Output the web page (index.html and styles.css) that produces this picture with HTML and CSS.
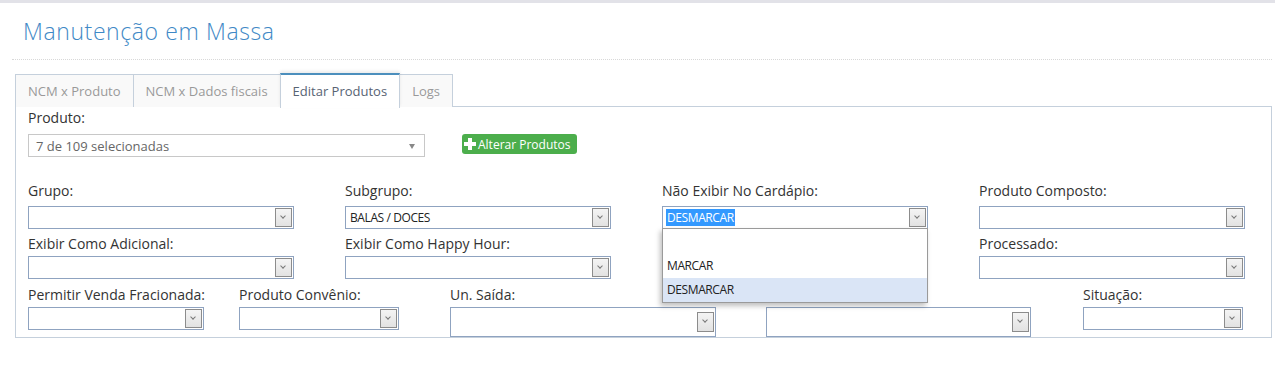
FILE: index.html
```html
<!DOCTYPE html>
<html lang="pt-BR">
<head>
    <meta charset="UTF-8">
    <title>Manutenção em Massa</title>
    <link rel="stylesheet" href="styles.css">
</head>
<body>
    <div class="topbar"></div>
    <div class="page">
        <div class="page-header">
            <h1>Manutenção em Massa</h1>
        </div>

        <ul class="tabs">
            <li class="tab">NCM x Produto</li>
            <li class="tab">NCM x Dados fiscais</li>
            <li class="tab active">Editar Produtos</li>
            <li class="tab">Logs</li>
        </ul>

        <div class="tab-content">
            <div class="produto-row">
                <div class="field">
                    <label>Produto:</label>
                    <div class="chosen">7 de 109 selecionadas<span class="caret"></span></div>
                </div>
                <button class="btn-green"><span class="plus"></span>Alterar Produtos</button>
            </div>

            <div class="grid4 row1">
                <div class="field">
                    <label>Grupo:</label>
                    <div class="select"><span class="arrow"></span></div>
                </div>
                <div class="field">
                    <label>Subgrupo:</label>
                    <div class="select"><span class="value">BALAS / DOCES</span><span class="arrow"></span></div>
                </div>
                <div class="field dropdown-host">
                    <label>Não Exibir No Cardápio:</label>
                    <div class="select"><span class="value selected">DESMARCAR</span><span class="arrow"></span></div>
                    <ul class="dropdown">
                        <li class="option blank"></li>
                        <li class="option">MARCAR</li>
                        <li class="option hover">DESMARCAR</li>
                    </ul>
                </div>
                <div class="field">
                    <label>Produto Composto:</label>
                    <div class="select"><span class="arrow"></span></div>
                </div>
            </div>

            <div class="grid4 row2">
                <div class="field">
                    <label>Exibir Como Adicional:</label>
                    <div class="select"><span class="arrow"></span></div>
                </div>
                <div class="field">
                    <label>Exibir Como Happy Hour:</label>
                    <div class="select"><span class="arrow"></span></div>
                </div>
                <div class="field">
                    <label>Exibir No Delivery:</label>
                    <div class="select"><span class="arrow"></span></div>
                </div>
                <div class="field">
                    <label>Processado:</label>
                    <div class="select"><span class="arrow"></span></div>
                </div>
            </div>

            <div class="grid5">
                <div class="field">
                    <label>Permitir Venda Fracionada:</label>
                    <div class="select w176"><span class="arrow"></span></div>
                </div>
                <div class="field">
                    <label>Produto Convênio:</label>
                    <div class="select w160"><span class="arrow"></span></div>
                </div>
                <div class="field">
                    <label>Un. Saída:</label>
                    <div class="select tall"><span class="arrow"></span></div>
                </div>
                <div class="field">
                    <label>Un. Entrada:</label>
                    <div class="select tall w265"><span class="arrow"></span></div>
                </div>
                <div class="field">
                    <label>Situação:</label>
                    <div class="select w160"><span class="arrow"></span></div>
                </div>
            </div>
        </div>
    </div>
</body>
</html>
```

FILE: styles.css
```css
body {
    margin: 0;
    font-family: 'Open Sans', sans-serif;
    font-size: 13px;
    color: #333;
    background: #fff;
}

.topbar {
    height: 3px;
    background: #e2e2e8;
}

.page {
    padding: 0 3px 0 15px;
}

.page-header {
    margin: 0 0 13px -3px;
    padding: 13px 0 13px 11px;
    border-bottom: 1px dotted #d8d8d8;
}

h1 {
    margin: 0;
    font-size: 23px;
    font-weight: 300;
    line-height: 30px;
    color: #3f89c6;
    letter-spacing: 0.6px;
}

/* tabs */
.tabs {
    display: flex;
    margin: 0;
    padding: 0;
    list-style: none;
    height: 33px;
    position: relative;
    z-index: 1;
}

.tab {
    height: 32px;
    margin-top: 1px;
    padding: 0 12px;
    line-height: 33px;
    color: #999;
    background: #f9f9f9;
    border: 1px solid #c5d0dc;
    border-bottom: none;
    margin-right: -1px;
}

.tab.active {
    height: 33px;
    margin-top: 0;
    line-height: 32px;
    color: #576373;
    background: #fff;
    border-top: 2px solid #4c8fbd;
    position: relative;
    z-index: 2;
    box-shadow: 0 -2px 3px rgba(0, 0, 0, 0.08);
}

.tab-content {
    border: 1px solid #c5d0dc;
    padding: 0 12px;
    height: 230px;
}

/* fields */
.field label {
    display: block;
    height: 16px;
    line-height: 16px;
    font-size: 14px;
    color: #333;
}

.produto-row {
    display: flex;
    align-items: flex-end;
}

.produto-row label {
    margin: 3px 0 8px;
}

.chosen {
    position: relative;
    width: 388px;
    height: 21px;
    line-height: 22px;
    border: 1px solid #c8c8c8;
    padding-left: 7px;
    color: #666;
    font-size: 13px;
}

.caret {
    position: absolute;
    right: 9px;
    top: 9px;
    border-left: 3px solid transparent;
    border-right: 3px solid transparent;
    border-top: 5px solid #888;
}

.btn-green {
    display: flex;
    align-items: center;
    margin: 0 0 3px 37px;
    height: 20px;
    padding: 0 7px 0 2px;
    border: none;
    border-radius: 3px;
    background: #4cae4c;
    color: #fff;
    font-family: 'Open Sans', sans-serif;
    font-size: 12px;
}

.plus {
    position: relative;
    width: 12px;
    height: 12px;
    margin-right: 2px;
}

.plus::before,
.plus::after {
    content: "";
    position: absolute;
    background: #fff;
}

.plus::before {
    left: 0;
    top: 4px;
    width: 12px;
    height: 4px;
}

.plus::after {
    left: 4px;
    top: 0;
    width: 4px;
    height: 12px;
}

.grid4 {
    display: grid;
    grid-template-columns: repeat(4, 266px);
    column-gap: 51px;
}

.grid4.row1 {
    margin-top: 26px;
}

.grid4.row1 label {
    margin-bottom: 7px;
}

.grid4.row2 {
    margin-top: 7px;
}

.grid5 {
    display: grid;
    grid-template-columns: 211px 211px 316px 317px 160px;
    margin-top: 8px;
}

.grid4.row2 label,
.grid5 label {
    margin-bottom: 4px;
}

.select {
    position: relative;
    width: 264px;
    height: 21px;
    border: 1px solid #8fa3c0;
    background: #fff;
}

.select.w176 { width: 174px; }
.select.w160 { width: 158px; }
.select.w265 { width: 263px; }
.select.tall { height: 28px; }

.select .value {
    position: absolute;
    left: 3px;
    top: 2px;
    height: 17px;
    line-height: 17px;
    padding: 0 1px;
    font-size: 12px;
    color: #222;
    letter-spacing: -0.4px;
}

.select .value.selected {
    background: #3399ff;
    color: #fff;
}

.arrow {
    position: absolute;
    right: 1px;
    top: 1px;
    width: 15px;
    height: 17px;
    border: 1px solid #8c8c8c;
    background: linear-gradient(#f4f4f4, #e2e2e2);
}

.select.tall .arrow {
    top: 4px;
    height: 18px;
}

.arrow::after {
    content: "";
    position: absolute;
    left: 5px;
    top: 5px;
    width: 3px;
    height: 3px;
    border-right: 1px solid #777;
    border-bottom: 1px solid #777;
    transform: rotate(45deg);
}

/* open dropdown list */
.dropdown-host {
    position: relative;
}

.dropdown {
    position: absolute;
    left: 0;
    top: 45px;
    z-index: 5;
    width: 264px;
    margin: 0;
    padding: 0;
    list-style: none;
    background: #fff;
    border: 1px solid #9a9a9a;
    box-shadow: -2px 3px 5px rgba(0, 0, 0, 0.25);
}

.option {
    height: 24px;
    line-height: 24px;
    padding-left: 4px;
    font-size: 12px;
    color: #222;
    letter-spacing: -0.4px;
}

.option.blank {
    height: 25px;
}

.option.hover {
    background: #dae5f6;
}
```
